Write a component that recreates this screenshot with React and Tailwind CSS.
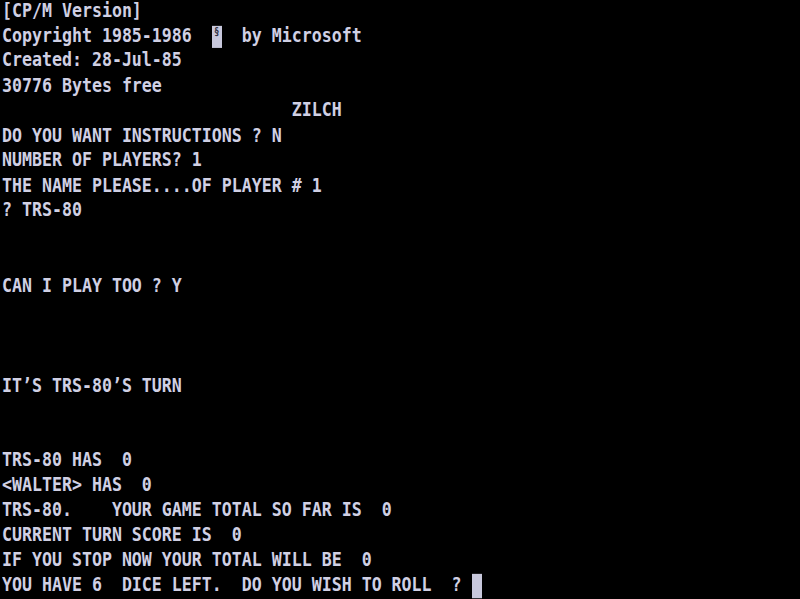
export default function App() {
  const rows = [
    "[CP/M Version]",
    null,
    "Created: 28-Jul-85",
    "30776 Bytes free",
    "                             ZILCH",
    "DO YOU WANT INSTRUCTIONS ? N",
    "NUMBER OF PLAYERS? 1",
    "THE NAME PLEASE....OF PLAYER # 1",
    "? TRS-80",
    "",
    "",
    "CAN I PLAY TOO ? Y",
    "",
    "",
    "",
    "IT’S TRS-80’S TURN",
    "",
    "",
    "TRS-80 HAS  0",
    "<WALTER> HAS  0",
    "TRS-80.    YOUR GAME TOTAL SO FAR IS  0",
    "CURRENT TURN SCORE IS  0",
    "IF YOU STOP NOW YOUR TOTAL WILL BE  0",
    "cursor",
  ];
  return (
    <div className="w-[800px] h-[599px] bg-black overflow-hidden">
      <div
        className="pl-[2px] -mt-[2px] origin-top scale-y-[1.161] text-[#d0d0e4] text-[16.6px] font-bold leading-[21.5px] whitespace-pre"
        style={{ fontFamily: '"DejaVu Sans Mono", monospace' }}
      >
        {rows.map((r, i) => {
          if (r === null) {
            return (
              <div key={i} className="h-[21.5px]">
                {"Copyright 1985-1986  "}
                <span className="relative inline-block w-[10px] h-[21.5px] align-top">
                  <span className="absolute left-[0px] top-[2px] w-[10px] h-[19px] bg-[#c8c8dc] text-[#303040] text-[9px] leading-[10px] text-center">
                    §
                  </span>
                </span>
                {"  by Microsoft"}
              </div>
            );
          }
          if (r === "cursor") {
            return (
              <div key={i} className="h-[21.5px]">
                {"YOU HAVE 6  DICE LEFT.  DO YOU WISH TO ROLL  ? "}
                <span className="relative inline-block w-[10px] h-[21.5px] align-top">
                  <span className="absolute left-0 top-[1px] w-[10px] h-[21px] bg-[#c8c8dc]" />
                </span>
              </div>
            );
          }
          return (
            <div key={i} className="h-[21.5px]">
              {r}
            </div>
          );
        })}
      </div>
    </div>
  );
}
